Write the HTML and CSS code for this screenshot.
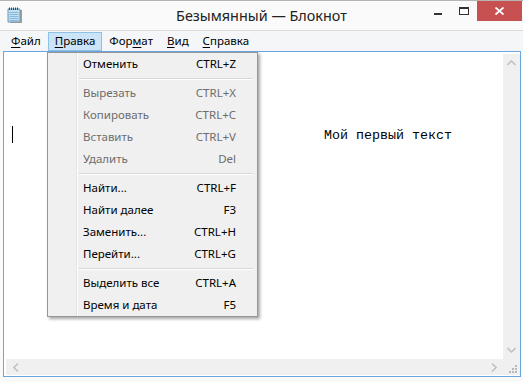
FILE: index.html
```html
<!DOCTYPE html>
<html lang="ru">
<head>
    <meta charset="UTF-8">
    <title>Безымянный — Блокнот</title>
    <link rel="stylesheet" href="styles.css">
</head>
<body>
    <div class="window">
        <div class="titlebar">
            <svg class="app-icon" width="16" height="17" viewBox="0 0 16 17">
                <path d="M3 3 L15 3 L15 16 L4 16 L3 15 Z" fill="#a89f86"/>
                <path d="M1 2 L13 2 L13 15 L1 15 Z" fill="#bfe0f5" stroke="#6a98b8" stroke-width="1"/>
                <path d="M2.5 5.5 H11.5 M2.5 7.5 H11.5 M2.5 9.5 H11.5 M2.5 11.5 H11.5 M2.5 13.5 H11.5" stroke="#8ab8d8" stroke-width="1"/>
                <path d="M2.5 0.5 V3 M4.5 0.5 V3 M6.5 0.5 V3 M8.5 0.5 V3 M10.5 0.5 V3" stroke="#3b4a57" stroke-width="1"/>
            </svg>
            <div class="title">Безымянный — Блокнот</div>
            <div class="controls">
                <div class="ctl ctl-min"><span class="min-bar"></span></div>
                <div class="ctl ctl-max"><span class="max-box"></span></div>
                <div class="ctl ctl-close">
                    <svg width="9" height="8" viewBox="0 0 9 8">
                        <path d="M0.5 0.5 L8.5 7.5 M8.5 0.5 L0.5 7.5" stroke="#fff" stroke-width="1.8"/>
                    </svg>
                </div>
            </div>
        </div>

        <div class="menubar">
            <span class="menubar-item"><u>Ф</u>айл</span>
            <span class="menubar-item active"><u>П</u>равка</span>
            <span class="menubar-item">Фор<u>м</u>ат</span>
            <span class="menubar-item"><u>В</u>ид</span>
            <span class="menubar-item"><u>С</u>правка</span>
        </div>

        <div class="editor">
            <div class="text-area">
                <div class="line">
                    <span class="caret"></span>
                    <span class="line-text">Мой первый текст</span>
                </div>
            </div>
            <div class="vscroll">
                <svg width="9" height="6" viewBox="0 0 9 6"><path d="M0.5 5 L4.5 1 L8.5 5" fill="none" stroke="#c2c2c2" stroke-width="1.6"/></svg>
                <svg width="9" height="6" viewBox="0 0 9 6"><path d="M0.5 1 L4.5 5 L8.5 1" fill="none" stroke="#c2c2c2" stroke-width="1.6"/></svg>
            </div>
            <div class="hscroll">
                <svg width="6" height="9" viewBox="0 0 6 9"><path d="M5 0.5 L1 4.5 L5 8.5" fill="none" stroke="#c2c2c2" stroke-width="1.6"/></svg>
                <svg width="6" height="9" viewBox="0 0 6 9"><path d="M1 0.5 L5 4.5 L1 8.5" fill="none" stroke="#c2c2c2" stroke-width="1.6"/></svg>
            </div>
            <div class="corner">
                <svg width="9" height="9" viewBox="0 0 9 9" fill="#b8b8b8">
                    <rect x="7" y="1" width="2" height="2"/>
                    <rect x="4" y="4" width="2" height="2"/><rect x="7" y="4" width="2" height="2"/>
                    <rect x="1" y="7" width="2" height="2"/><rect x="4" y="7" width="2" height="2"/><rect x="7" y="7" width="2" height="2"/>
                </svg>
            </div>
        </div>

        <!-- открытое меню "Правка" -->
        <div class="dropdown">
            <div class="item"><span>Отменить</span><span class="key">CTRL+Z</span></div>
            <div class="sep"></div>
            <div class="item disabled"><span>Вырезать</span><span class="key">CTRL+X</span></div>
            <div class="item disabled"><span>Копировать</span><span class="key">CTRL+C</span></div>
            <div class="item disabled"><span>Вставить</span><span class="key">CTRL+V</span></div>
            <div class="item disabled"><span>Удалить</span><span class="key">Del</span></div>
            <div class="sep"></div>
            <div class="item"><span>Найти...</span><span class="key">CTRL+F</span></div>
            <div class="item"><span>Найти далее</span><span class="key">F3</span></div>
            <div class="item"><span>Заменить...</span><span class="key">CTRL+H</span></div>
            <div class="item"><span>Перейти...</span><span class="key">CTRL+G</span></div>
            <div class="sep"></div>
            <div class="item"><span>Выделить все</span><span class="key">CTRL+A</span></div>
            <div class="item"><span>Время и дата</span><span class="key">F5</span></div>
        </div>
    </div>
</body>
</html>
```

FILE: styles.css
```css
body {
    margin: 0;
    font-family: "Noto Sans", "Open Sans", sans-serif;
    font-size: 11.5px;
    color: #000;
    background: #fafafa;
}

.window {
    position: relative;
    width: 523px;
    height: 382px;
    display: flex;
    flex-direction: column;
    background: #fafafa;
    box-sizing: border-box;
    border-top: 1px solid #b4b4b4;
    overflow: hidden;
}

.titlebar {
    height: 29px;
    display: flex;
    align-items: flex-start;
    position: relative;
}

.app-icon {
    margin: 6px 0 0 7px;
}

.title {
    position: absolute;
    left: 0;
    right: 0;
    top: 5px;
    text-align: center;
    font-size: 14.4px;
    color: #222;
    pointer-events: none;
}

.controls {
    margin-left: auto;
    display: flex;
    height: 20px;
}

.ctl {
    display: flex;
    align-items: center;
    justify-content: center;
}

.ctl-min {
    width: 26px;
    align-items: flex-start;
}

.min-bar {
    display: block;
    width: 8px;
    height: 2px;
    margin-top: 12px;
    background: #333;
}

.ctl-max {
    width: 26px;
    align-items: flex-start;
}

.max-box {
    display: block;
    width: 8px;
    height: 5px;
    margin-top: 6px;
    border: 1px solid #333;
    border-top-width: 2px;
}

.ctl-close {
    width: 45px;
    margin-right: 1px;
    background: #c75050;
}

.menubar {
    height: 20px;
    display: flex;
    align-items: center;
    padding-left: 4px;
    background: #f5f6f7;
    border-top: 1px solid #dadbdc;
}

.menubar-item {
    height: 17px;
    line-height: 16px;
    padding: 0 6px;
    border: 1px solid transparent;
}

.menubar-item u {
    text-underline-offset: 2px;
}

.menubar-item.active {
    background: #cce4f7;
    border-color: #8fc0e8;
}

.editor {
    flex: 1;
    margin: 0 2px 5px 3px;
    border: 1px solid #6aa6e0;
    background: #fff;
    padding: 1px 0 1px 1px;
    display: grid;
    grid-template-columns: 1fr 17px;
    grid-template-rows: 1fr 16px;
}

.text-area {
    padding-top: 73px;
    overflow: hidden;
}

.line {
    display: flex;
    align-items: center;
    height: 17px;
}

.caret {
    width: 1px;
    height: 17px;
    margin-left: 7px;
    background: #000;
}

.line-text {
    margin-left: 311px;
    font-family: "Liberation Mono", "DejaVu Sans Mono", monospace;
    font-size: 13.33px;
    padding-top: 2px;
}

.vscroll {
    background: #f0f0f0;
    margin-top: 1px;
    display: flex;
    flex-direction: column;
    justify-content: space-between;
    align-items: center;
    padding: 6px 0 6px;
}

.hscroll {
    background: #f0f0f0;
    margin-left: 1px;
    display: flex;
    justify-content: space-between;
    align-items: center;
    padding: 0 6px 0 7px;
}

.corner {
    background: #f0f0f0;
    display: flex;
    align-items: flex-end;
    justify-content: flex-end;
    padding: 0 3px 2px 0;
}

.dropdown {
    position: absolute;
    left: 47px;
    top: 51px;
    width: 209px;
    padding: 0;
    background: #f0f0f0 linear-gradient(to right, transparent 28px, #e2e3e3 28px, #e2e3e3 29px, #fff 29px, #fff 30px, transparent 30px);
    border: 1px solid #979797;
    box-shadow: 2px 2px 3px rgba(0, 0, 0, 0.35);
}

.item {
    height: 20px;
    padding: 0 21px 2px 35px;
    display: flex;
    align-items: center;
    justify-content: space-between;
}

.item.disabled {
    color: #6d6d6d;
}

.sep {
    height: 1px;
    margin: 3px 4px 2px 31px;
    background: #d7d7d7;
    border-bottom: 1px solid #fff;
}
```
